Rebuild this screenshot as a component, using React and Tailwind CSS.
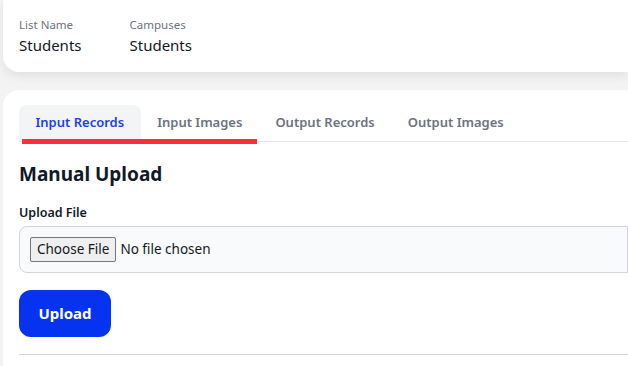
import React, { useState } from 'react';

const tabs = ['Input Records', 'Input Images', 'Output Records', 'Output Images'];

const App = () => {
  const [active, setActive] = useState(0);

  return (
    <div className="h-screen bg-[#f3f3f4] pl-[3px] overflow-hidden" style={{ fontFamily: '"Noto Sans", "Open Sans", sans-serif' }}>
      {/* list summary */}
      <div className="h-[72px] bg-white rounded-bl-2xl shadow-[0_4px_10px_rgba(0,0,0,0.08)] flex gap-[48px] px-4 pt-[16px]">
        <div>
          <p className="text-[11.5px] text-[#6b7280] leading-[18px]">List Name</p>
          <p className="text-[15px] text-[#111827] leading-[22px]">Students</p>
        </div>
        <div>
          <p className="text-[11.5px] text-[#6b7280] leading-[18px]">Campuses</p>
          <p className="text-[15px] text-[#111827] leading-[22px]">Students</p>
        </div>
      </div>

      <div className="mt-[18px] bg-white rounded-tl-2xl pl-4 pt-[15px] h-[276px]">
        <div className="relative flex border-b border-[#e5e7eb]">
          {tabs.map((t, i) => (
            <button
              key={t}
              onClick={() => setActive(i)}
              className={`h-[36px] px-[16.5px] text-[13px] font-semibold rounded-t-lg ${i === active ? 'bg-[#f3f4f6] text-[#1d3fe6]' : 'text-[#6b7280]'}`}
            >
              {t}
            </button>
          ))}
          <div className="absolute left-[3px] top-[34px] h-[5px] w-[235px] bg-[#ff2d38]" />
        </div>

        <h2 className="mt-[19px] text-[19px] font-bold text-[#111827] leading-[26px]">Manual Upload</h2>

        <label className="block mt-[17px] text-[12.5px] font-semibold text-[#111827] leading-[18px]">Upload File</label>
        <div className="mt-[4px] h-[47px] bg-[#f9fafb] border border-[#d1d5db] rounded-l-lg flex items-center pl-[10px]">
          <input type="file" className="text-[13.5px] text-[#111827] file:mr-[4px] file:px-[6px] file:h-[25px] file:border file:border-[#767676] file:bg-[#efefef] file:rounded-[2px] file:text-[13.5px]" />
        </div>

        <button className="mt-[17px] w-[92px] h-[47px] rounded-xl bg-[#0533ef] text-white text-[15px] font-bold">
          Upload
        </button>

        <div className="mt-[17px] border-t border-[#d1d5db]" />
      </div>
    </div>
  );
};

export default App;
